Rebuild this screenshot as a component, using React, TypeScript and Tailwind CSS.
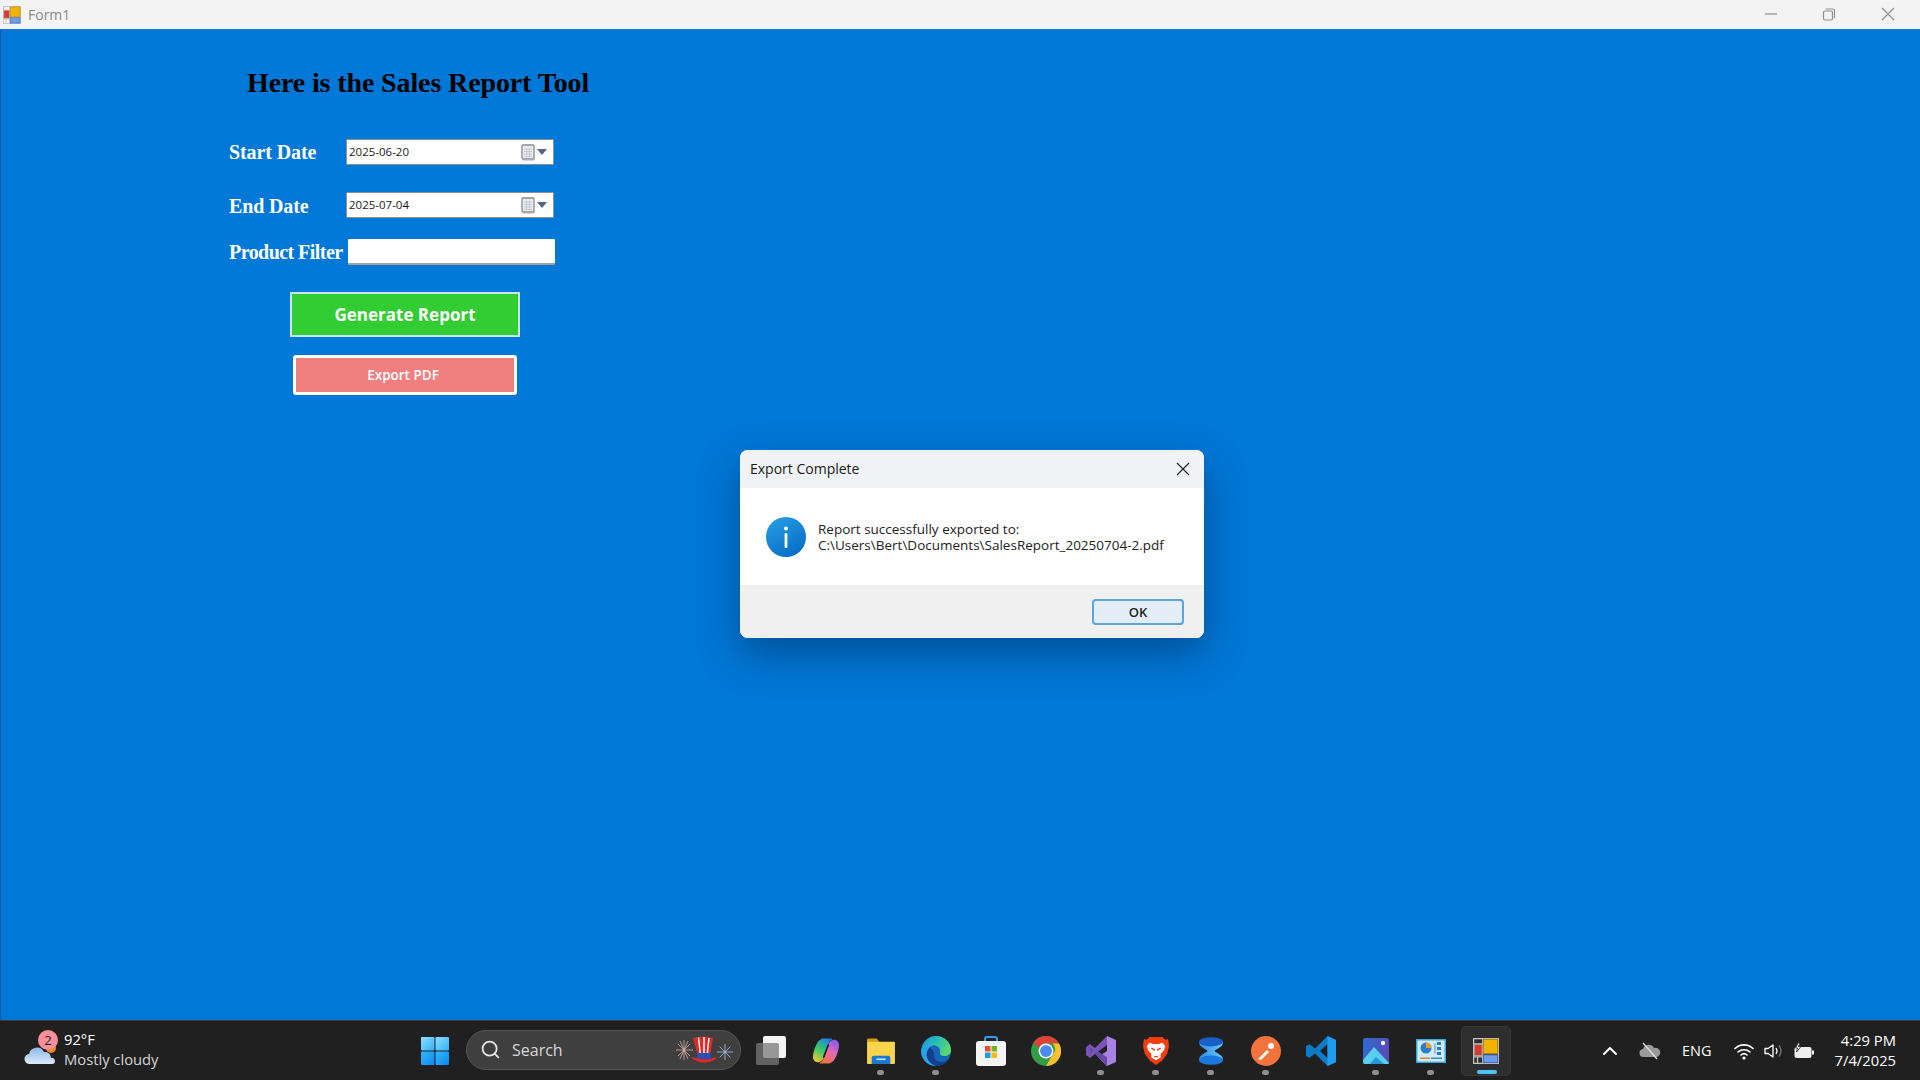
import { ChevronUp, Search } from 'lucide-react';

const uiFont = 'font-["Open_Sans",sans-serif]';

function AppIcon() {
  return (
    <svg viewBox="0 0 20 20" className="w-full h-full">
      <rect x="0.5" y="0.5" width="19" height="19" fill="none" stroke="#c4c4c4" />
      <path d="M0.5 4.5h7M0.5 14.5h7M3.5 14.5v5M7.5 0.5v19" stroke="#c4c4c4" fill="none" />
      <rect x="1" y="5" width="6" height="8.5" fill="#d8392f" stroke="#a8a8a8" strokeWidth="0.7" />
      <rect x="8" y="1" width="11" height="11" fill="#f0b400" stroke="#b98800" strokeWidth="0.7" />
      <rect x="8" y="13" width="11" height="6" fill="#6f9be8" stroke="#3d68b8" strokeWidth="0.7" />
    </svg>
  );
}

function CalendarButton() {
  return (
    <span className="flex items-center gap-[1px] pr-[3px]">
      <svg width="15" height="17" viewBox="0 0 15 17">
        <rect x="1" y="1" width="12" height="14" rx="1" fill="#e8ebf0" stroke="#8b8b8b" strokeWidth="1.3" />
        <path d="M3 5h8M3 7.5h8M3 10h8M3 12.5h8M5.5 4v9M8.5 4v9" stroke="#b8c0cc" strokeWidth="0.7" />
        <path d="M2 16h11l1-1" stroke="#b0b0b0" fill="none" />
      </svg>
      <svg width="10" height="6" viewBox="0 0 10 6">
        <path d="M0 0h10L5 6z" fill="#54648a" />
      </svg>
    </span>
  );
}

function DateField({ value }: { value: string }) {
  return (
    <div className="w-[208px] h-[26px] bg-white border border-[#8f8f8f] flex items-center justify-between pl-[2px] pr-[3px] rounded-[1px]">
      <span className={`text-[11.5px] text-[#1a1a1a] ${uiFont}`}>{value}</span>
      <CalendarButton />
    </div>
  );
}

function FormRow({
  label,
  className,
  labelClass,
  children,
}: {
  label: string;
  className: string;
  labelClass: string;
  children: React.ReactNode;
}) {
  return (
    <div className={`flex items-center h-[26px] ${className}`}>
      <span
        className={`w-[117px] shrink-0 whitespace-nowrap text-white font-bold text-[20px] leading-[26px] font-['Liberation_Serif',serif] ${labelClass}`}
      >
        {label}
      </span>
      {children}
    </div>
  );
}

function InfoIcon() {
  return (
    <svg width="40" height="40" viewBox="0 0 40 40">
      <defs>
        <linearGradient id="info" x1="0" y1="0" x2="0.6" y2="1">
          <stop offset="0" stopColor="#2aa0e6" />
          <stop offset="1" stopColor="#0670c8" />
        </linearGradient>
      </defs>
      <circle cx="20" cy="20" r="20" fill="url(#info)" />
      <circle cx="20" cy="11.5" r="2" fill="#fff" />
      <rect x="18.6" y="16" width="2.8" height="15" rx="1" fill="#fff" />
    </svg>
  );
}

function MessageDialog() {
  return (
    <div className={`absolute left-[739px] top-[421px] w-[464px] h-[188px] rounded-[8px] overflow-hidden bg-white shadow-[0_16px_40px_rgba(0,30,70,0.45)] ${uiFont}`}>
      <div className="h-[38px] bg-[#f0f2f5] flex items-center justify-between pl-[10px] pr-[14px]">
        <span className="pb-[2px] text-[14px] text-[#1a1a1a]">Export Complete</span>
        <svg width="14" height="14" viewBox="0 0 14 14">
          <path d="M1 1l12 12M13 1L1 13" stroke="#222" strokeWidth="1.2" />
        </svg>
      </div>
      <div className="h-[97px] flex items-center pl-[26px] gap-[12px]">
        <InfoIcon />
        <p className="pt-[1px] text-[13.5px] leading-[16px] text-[#222] font-medium whitespace-nowrap">
          Report successfully exported to:
          <br />
          C:\Users\Bert\Documents\SalesReport_20250704-2.pdf
        </p>
      </div>
      <div className="h-[53px] bg-[#f0f0f0] flex items-center justify-end pr-[20px]">
        <button className="w-[92px] h-[26px] pt-[1px] rounded-[4px] bg-[#e3eef9] border-2 border-[#5aa5e0] text-[13px] leading-[20px] font-semibold text-[#222]">
          OK
        </button>
      </div>
    </div>
  );
}

function WeatherIcon() {
  return (
    <div className="relative w-[34px] h-[40px]">
      <svg width="34" height="40" viewBox="0 0 34 40" className="absolute left-0 top-0">
        <defs>
          <linearGradient id="cloud" x1="0" y1="0" x2="0" y2="1">
            <stop offset="0" stopColor="#8fb8e8" />
            <stop offset="1" stopColor="#dcebfb" />
          </linearGradient>
        </defs>
        <circle cx="27" cy="17" r="5" fill="#f08a24" />
        <path d="M6 33a5 5 0 0 1-1-10 8 8 0 0 1 15-2 6 6 0 0 1 7 6 3 3 0 0 1 4 3 3 3 0 0 1-3 3z" fill="url(#cloud)" />
      </svg>
      <span className="absolute left-[14px] top-[-1px] w-[20px] h-[20px] rounded-full bg-[#ff8f98] text-[#1a1a1a] text-[13px] leading-[20px] text-center">
        2
      </span>
    </div>
  );
}

function WindowsLogo() {
  return (
    <svg width="30" height="30" viewBox="0 0 30 30">
      <defs>
        <linearGradient id="winA" x1="0" y1="0" x2="1" y2="1">
          <stop offset="0" stopColor="#8ae0ff" />
          <stop offset="1" stopColor="#34b0f8" />
        </linearGradient>
        <linearGradient id="winB" x1="0" y1="0" x2="1" y2="1">
          <stop offset="0" stopColor="#2fbcff" />
          <stop offset="1" stopColor="#0f86ee" />
        </linearGradient>
      </defs>
      <rect x="1" y="1" width="13.5" height="13.5" rx="1" fill="url(#winA)" />
      <rect x="15.5" y="1" width="13.5" height="13.5" rx="1" fill="url(#winA)" />
      <rect x="1" y="15.5" width="13.5" height="13.5" rx="1" fill="url(#winB)" />
      <rect x="15.5" y="15.5" width="13.5" height="13.5" rx="1" fill="url(#winB)" />
    </svg>
  );
}

function HolidayHat() {
  return (
    <svg width="60" height="30" viewBox="0 0 60 30">
      <g stroke="#d8b0a8" strokeWidth="0.8">
        <path d="M8 5v20M-1 15h18M2 9l12 12M14 9L2 21M4 6l8 18M12 6L4 24" />
      </g>
      <g stroke="#a8c4e4" strokeWidth="0.8">
        <path d="M49 9v16M41 17h16M43.5 11.5l11 11M54.5 11.5l-11 11" />
      </g>
      <g transform="translate(-3 0)">
        <path d="M20 3q10-3 20 0l-3 18H25z" fill="#e02828" />
        <path d="M25.5 2.500l2 18M31 2v19M36 3l-2 18" stroke="#fff" strokeWidth="1.5" />
        <rect x="24" y="18" width="14" height="6" fill="#2b4fb4" />
        <path d="M17 22q13 10 26 2l-1-2q-6 4-19 1z" fill="#e02828" />
      </g>
    </svg>
  );
}

function TaskViewIcon() {
  return (
    <svg width="30" height="30" viewBox="0 0 30 30">
      <rect x="7" y="0" width="23" height="22" rx="2" fill="#f4f4f4" />
      <rect x="0" y="7" width="23" height="22" rx="2" fill="#787878" fillOpacity="0.75" />
    </svg>
  );
}

function CopilotIcon() {
  const lobe =
    'M9 2c1-1 2-1.500 4-1.500h8c1 0 1 1 0 1.500-2 1-3 3-4 6l-4 13c-1 4-3 7-7 7-3 0-5-3-5-6 0-5 2-11 4-15 1-2 2-4 4-5z';
  return (
    <svg width="28" height="26" viewBox="0 0 30 30" preserveAspectRatio="none">
      <defs>
        <linearGradient id="copA" x1="0.7" y1="0" x2="0.2" y2="1">
          <stop offset="0" stopColor="#1a84e8" />
          <stop offset="0.5" stopColor="#38c86a" />
          <stop offset="1" stopColor="#f0c828" />
        </linearGradient>
        <linearGradient id="copB" x1="0.7" y1="0" x2="0.2" y2="1">
          <stop offset="0" stopColor="#f4703a" />
          <stop offset="0.5" stopColor="#e668b4" />
          <stop offset="1" stopColor="#7b5cf0" />
        </linearGradient>
      </defs>
      <path d={lobe} fill="url(#copA)" />
      <path d={lobe} fill="url(#copB)" transform="rotate(180 15 15)" />
      <path d="M17.500 8L12.500 22" stroke="#202020" strokeWidth="1.800" strokeLinecap="round" />
    </svg>
  );
}

function FolderIcon() {
  return (
    <svg width="30" height="26" viewBox="0 1 30 28">
      <path d="M0 3a1.500 1.500 0 0 1 1.500-1.500h9l3 4h-13.500z" fill="#d89a12" />
      <rect x="0" y="5" width="30" height="24" rx="1" fill="#fbd44e" />
      <path d="M5 29v-7a2 2 0 0 1 2-2h16a2 2 0 0 1 2 2v7z" fill="#1a78d0" />
      <rect x="10" y="23" width="10" height="1.800" fill="#bfe0ff" />
    </svg>
  );
}

function EdgeIcon() {
  return (
    <svg width="30" height="30" viewBox="0 0 30 30">
      <defs>
        <linearGradient id="edgeA" x1="0" y1="0" x2="1" y2="0.5">
          <stop offset="0" stopColor="#1b8ee0" />
          <stop offset="0.55" stopColor="#2cc0b0" />
          <stop offset="1" stopColor="#5ad870" />
        </linearGradient>
      </defs>
      <circle cx="15" cy="15" r="15" fill="#1565b8" />
      <path d="M14 9C8 10 5 15 6 21c1 4 4 7 9 9C7 30 1 24 0 16c0-3 1-4 2-5 3-3 8-4 12-2z" fill="#2aa2ea" />
      <path d="M13 16c-1 6 2 10 7 10 4 0 7-2 9-5-2 6-8 9-14 9-5-2-8-5-9-9-1-4 1-8 3-10z" fill="#123f88" />
      <path d="M0.500 13C2 5 8 0 15 0c9 0 15 7 15 14 0 4-3 6-7 6-3 0-4-1-4-3 1-4-2-8-7-8-5 0-9 1-11.500 4z" fill="url(#edgeA)" />
    </svg>
  );
}

function StoreIcon() {
  return (
    <svg width="30" height="30" viewBox="0 0 30 30">
      <path d="M9 7V3a2 2 0 0 1 2-2h8a2 2 0 0 1 2 2v4" fill="none" stroke="#2a9de8" strokeWidth="2" />
      <rect x="0" y="5" width="30" height="25" rx="3" fill="#f4f4f4" />
      <rect x="9" y="10" width="5.500" height="5.500" fill="#e8502a" />
      <rect x="15.500" y="10" width="5.500" height="5.500" fill="#70b820" />
      <rect x="9" y="16.500" width="5.500" height="5.500" fill="#14a0ee" />
      <rect x="15.500" y="16.500" width="5.500" height="5.500" fill="#fcb814" />
    </svg>
  );
}

function ChromeIcon() {
  return (
    <svg width="30" height="30" viewBox="0 0 30 30">
      <circle cx="15" cy="15" r="15" fill="#2f9e44" />
      <path d="M15 0a15 15 0 0 1 13 7.500H15a7.500 7.500 0 0 0-7 5L2.500 6.500A15 15 0 0 1 15 0z" fill="#dd4437" />
      <path d="M28 7.500A15 15 0 0 1 15 30l6.500-11a7.500 7.500 0 0 0 0-11.500z" fill="#fbc02d" />
      <circle cx="15" cy="15" r="7.500" fill="#fff" />
      <circle cx="15" cy="15" r="6" fill="#4a8cf0" />
    </svg>
  );
}

function VisualStudioIcon() {
  return (
    <svg width="30" height="30" viewBox="0 0 30 30">
      <path d="M21 0l9 4v22l-9 4-9-9 9-6V9z" fill="#a883e4" />
      <path d="M21 0v9L9 18l-5 4-4-3V11l4-3 5 4z" fill="#7a55b8" />
      <path d="M4 11l4 4-4 4zM9 18l3-2.500L21 21v9z" fill="#6a4aa8" />
    </svg>
  );
}

function BraveIcon() {
  return (
    <svg width="26" height="30" viewBox="0 0 28 30">
      <path d="M7 0h14l3 3 3-1 1 8-2 8-5 7-7 5-7-5-5-7-2-8 1-8 3 1z" fill="#f53d12" />
      <path d="M7 6l4 1.500h6L21 6l3 4-2 5-3 3v4l-5 3-5-3v-4l-3-3-2-5z" fill="#fff" />
      <path d="M9 12l4 2M19 12l-4 2M12 21h4" stroke="#f53d12" strokeWidth="1.500" />
    </svg>
  );
}

function AzureDataIcon() {
  return (
    <svg width="24" height="30" viewBox="0 0 26 30">
      <defs>
        <linearGradient id="adsA" x1="0" y1="0" x2="1" y2="0">
          <stop offset="0" stopColor="#2d8de6" />
          <stop offset="1" stopColor="#6cc8f8" />
        </linearGradient>
      </defs>
      <path d="M0 5c0 7 9 8 9 10s-9 3-9 10h26c0-7-9-8-9-10s9-3 9-10z" fill="url(#adsA)" />
      <ellipse cx="13" cy="5" rx="13" ry="5" fill="#1660c8" />
      <ellipse cx="13" cy="25" rx="13" ry="5" fill="#1b78e0" />
    </svg>
  );
}

function PostmanIcon() {
  return (
    <svg width="30" height="30" viewBox="0 0 30 30">
      <circle cx="15" cy="15" r="15" fill="#f4733d" />
      <path d="M7 23l9-9 2 2-8 8z" fill="#fff" />
      <circle cx="20" cy="10" r="3" fill="#fff" />
    </svg>
  );
}

function VsCodeIcon() {
  return (
    <svg width="30" height="30" viewBox="0 0 30 30">
      <path d="M21.500 0L30 4v22l-8.500 4L9 17.500l-5.500 4.300L0 20v-10l3.500-1.800L9 12.500zM21.500 8l-7.500 7 7.500 7z" fill="#0d7cc8" />
      <path d="M21.500 0L30 4v22l-8.500 4z" fill="#1f9cf0" />
    </svg>
  );
}

function PhotosIcon() {
  return (
    <svg width="26" height="26" viewBox="0 0 26 26">
      <defs>
        <linearGradient id="photoA" x1="0" y1="0" x2="1" y2="0.4">
          <stop offset="0" stopColor="#2a6fd0" />
          <stop offset="1" stopColor="#5a4ab8" />
        </linearGradient>
      </defs>
      <rect x="0" y="0" width="26" height="26" rx="2.500" fill="url(#photoA)" />
      <circle cx="20" cy="5" r="2.200" fill="#f4f4f4" />
      <path d="M0 22L11 9l15 16a1 1 0 0 1-1 1H2a2 2 0 0 1-2-2z" fill="#55d0ee" />
      <path d="M7 26l6-7 8 7z" fill="#2a94d8" />
    </svg>
  );
}

function ChartAppIcon() {
  return (
    <svg width="30" height="24" viewBox="0 0 30 24">
      <rect x="0" y="0" width="30" height="24" fill="#3aa8e0" />
      <rect x="1.500" y="1.500" width="27" height="21" fill="#cfeafa" />
      <circle cx="10" cy="9" r="5.500" fill="#2a80c8" />
      <path d="M10 9V3.500A5.500 5.500 0 0 1 15.500 9z" fill="#f09a28" />
      <rect x="21" y="3" width="4" height="3" fill="#2a78c8" />
      <rect x="21" y="8" width="4" height="3" fill="#2a78c8" />
      <rect x="21" y="13" width="4" height="3" fill="#2a78c8" />
      <path d="M19 4.500v10" stroke="#2a78c8" strokeWidth="0.800" />
      <rect x="4" y="18.500" width="10" height="1.500" fill="#e8801c" />
      <rect x="15" y="18.500" width="11" height="1.500" fill="#3a88c8" />
    </svg>
  );
}

const taskbarApps = [
  { name: 'task-view', icon: <TaskViewIcon />, pip: false },
  { name: 'copilot', icon: <CopilotIcon />, pip: false },
  { name: 'explorer', icon: <FolderIcon />, pip: true },
  { name: 'edge', icon: <EdgeIcon />, pip: true },
  { name: 'store', icon: <StoreIcon />, pip: false },
  { name: 'chrome', icon: <ChromeIcon />, pip: false },
  { name: 'visual-studio', icon: <VisualStudioIcon />, pip: true },
  { name: 'brave', icon: <BraveIcon />, pip: true },
  { name: 'azure-data', icon: <AzureDataIcon />, pip: true },
  { name: 'postman', icon: <PostmanIcon />, pip: true },
  { name: 'vscode', icon: <VsCodeIcon />, pip: false },
  { name: 'photos', icon: <PhotosIcon />, pip: true },
  { name: 'chart-app', icon: <ChartAppIcon />, pip: true },
];

function TaskbarSlot({ icon, pip }: { icon: React.ReactNode; pip: boolean }) {
  return (
    <div className="relative w-[55px] h-[50px] flex items-center justify-center">
      {icon}
      {pip && <span className="absolute bottom-[1px] left-[24px] w-[7px] h-[5px] rounded-full bg-[#8f8f8f]" />}
    </div>
  );
}

function Taskbar() {
  return (
    <div className={`h-[60px] shrink-0 bg-[#202020] border-t border-[#3a3a3a] flex items-center text-white ${uiFont}`}>
      <div className="w-[420px] shrink-0 flex items-center pl-[24px] gap-[6px]">
        <WeatherIcon />
        <div className="pb-[4px] text-[14.75px] leading-[20px]">
          <div>92°F</div>
          <div className="text-[#d4d4d4]">Mostly cloudy</div>
        </div>
      </div>
      <WindowsLogo />
      <div className="ml-[16px] mb-[2px] w-[275px] h-[40px] rounded-full bg-[#3f3f3f] border border-[#555] flex items-center pl-[13px] pr-[4px]">
        <Search size={21} className="text-[#e8e8e8]" strokeWidth={2} />
        <span className="ml-[11px] text-[16px] text-[#d8d8d8] flex-1">Search</span>
        <HolidayHat />
      </div>
      <div className="ml-[2px] flex items-center">
        {taskbarApps.map((app) => (
          <TaskbarSlot key={app.name} icon={app.icon} pip={app.pip} />
        ))}
        <div className="relative w-[50px] h-[50px] ml-[3px] rounded-[5px] bg-[#2e2e2e] border border-[#383838] flex items-center justify-center">
          <div className="w-[26px] h-[26px]">
            <AppIcon />
          </div>
          <span className="absolute bottom-[1px] left-[15px] w-[20px] h-[4px] rounded-full bg-[#4cc2ff]" />
        </div>
      </div>
      <div className="ml-auto flex items-center pr-[24px]">
        <ChevronUp size={24} className="text-white mr-[17px]" />
        <svg width="22" height="18" viewBox="0 0 22 18" className="mr-[21px]">
          <path d="M5 15a4 4 0 0 1-1-8 6 6 0 0 1 11-1 4.500 4.500 0 0 1 3 9z" fill="#9a9a9a" />
          <path d="M4 1l14 16" stroke="#ddd" strokeWidth="1.400" />
        </svg>
        <span className="text-[14.5px] mr-[22px]">ENG</span>
        <svg width="20" height="18" viewBox="0 0 20 18" fill="none" stroke="#fff" strokeWidth="1.600" strokeLinecap="round" className="mr-[10px]">
          <path d="M1 6.500a13 13 0 0 1 18 0M4 10a9 9 0 0 1 12 0M7 13a4.500 4.500 0 0 1 6 0" />
          <circle cx="10" cy="16" r="0.800" fill="#fff" />
        </svg>
        <svg width="20" height="18" viewBox="0 0 20 18" fill="none" strokeWidth="1.300" className="mr-[9px]">
          <path d="M1 6.500h3L9 3v12l-5-3.500H1z" stroke="#fff" strokeLinejoin="round" />
          <path d="M12 6q2 3 0 6" stroke="#fff" />
          <path d="M15 3.500q4 5.500 0 11" stroke="#777" />
        </svg>
        <svg width="22" height="18" viewBox="0 0 22 18" className="mr-[20px]">
          <rect x="1.500" y="5" width="17" height="11" rx="2" fill="#eee" />
          <rect x="19" y="8.500" width="2" height="4" fill="#eee" />
          <path d="M5 1L2.500 6h2L3.500 10 8 4.500H5.500L7 1z" fill="#fff" stroke="#202020" strokeWidth="0.800" />
        </svg>
        <div className="pb-[2px] text-[14.75px] leading-[20px] text-right">
          <div>4:29 PM</div>
          <div>7/4/2025</div>
        </div>
      </div>
    </div>
  );
}

export default function App() {
  return (
    <div className="w-[1920px] h-[1080px] flex flex-col overflow-hidden bg-[#0078d7]">
      <div className={`h-[29px] shrink-0 bg-[#f3f3f3] flex items-center pl-[3px] ${uiFont}`}>
        <div className="w-[18px] h-[18px]">
          <AppIcon />
        </div>
        <span className="ml-[7px] text-[14px] text-[#8a8a8a]">Form1</span>
        <div className="ml-auto flex items-center text-[#8f8f8f]">
          <svg width="58" height="29" viewBox="0 0 58 29">
            <path d="M21 14h12" stroke="currentColor" strokeWidth="1.200" />
          </svg>
          <svg width="58" height="29" viewBox="0 0 58 29">
            <rect x="21.500" y="11" width="9" height="9" rx="1.500" fill="none" stroke="currentColor" strokeWidth="1.200" />
            <path d="M23.500 9h7a2 2 0 0 1 2 2v7" fill="none" stroke="currentColor" strokeWidth="1.200" />
          </svg>
          <svg width="60" height="29" viewBox="0 0 60 29">
            <path d="M22 8l12 12M34 8L22 20" stroke="currentColor" strokeWidth="1.200" />
          </svg>
        </div>
      </div>

      <main className="relative flex-1 pl-[228px] border-l border-[#0a5aa0]">
        <h1 className="ml-[18px] mt-[37px] h-[34px] leading-[34px] text-[28px] tracking-[-0.12px] font-bold text-black font-['Liberation_Serif',serif] whitespace-nowrap">
          Here is the Sales Report Tool
        </h1>
        <FormRow label="Start Date" labelClass="tracking-[-0.1px]" className="mt-[39px]">
          <DateField value="2025-06-20" />
        </FormRow>
        <FormRow label="End Date" labelClass="pt-[2px] tracking-[-0.15px]" className="mt-[27px]">
          <DateField value="2025-07-04" />
        </FormRow>
        <FormRow label="Product Filter" labelClass="tracking-[-0.55px]" className="mt-[21px]">
          <input className="ml-[2px] w-[207px] h-[26px] bg-white border-b-2 border-[#a0a0a0] rounded-[1px] outline-none" />
        </FormRow>
        <button className={`block ml-[61px] mt-[27px] w-[230px] h-[45px] bg-[#32cd32] border-2 border-[#c8e8f0] text-white font-bold text-[17px] ${uiFont}`}>
          Generate Report
        </button>
        <button className={`block ml-[64px] mt-[18px] w-[224px] h-[40px] pr-[4px] rounded-[3px] bg-[#f08080] border-[3px] border-white text-white font-semibold text-[13.5px] ${uiFont}`}>
          Export PDF
        </button>
        <MessageDialog />
      </main>

      <Taskbar />
    </div>
  );
}
